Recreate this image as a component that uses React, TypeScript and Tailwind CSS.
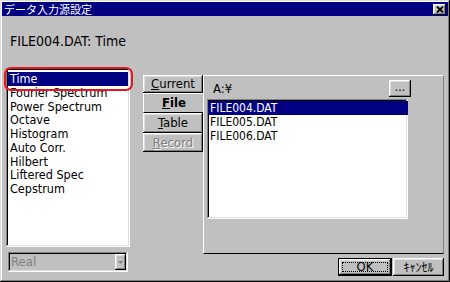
import React from 'react';

const ui = "font-['Liberation_Sans_Narrow','DejaVu_Sans_Condensed','Liberation_Sans',sans-serif]";
const jp = "font-['Noto_Sans_CJK_JP',sans-serif]";
const raised =
  'shadow-[inset_-1px_-1px_#000,inset_1px_1px_#fff,inset_-2px_-2px_#808080,inset_2px_2px_#dfdfdf]';
const sunken =
  'shadow-[inset_-1px_-1px_#fff,inset_1px_1px_#808080,inset_-2px_-2px_#dfdfdf,inset_2px_2px_#000]';

const kinds = [
  'Time',
  'Fourier Spectrum',
  'Power Spectrum',
  'Octave',
  'Histogram',
  'Auto Corr.',
  'Hilbert',
  'Liftered Spec',
  'Cepstrum',
];

const files = ['FILE004.DAT', 'FILE005.DAT', 'FILE006.DAT'];

function Tab({ label, selected, disabled, h }: { label: string; selected?: boolean; disabled?: boolean; h: string }) {
  return (
    <div
      className={`${h} flex items-center justify-center text-[13px] ${
        selected
          ? 'w-[61px] border-t border-l border-white border-b border-b-black font-bold'
          : `w-[60px] ${raised}`
      } ${disabled ? 'text-[#808080] [text-shadow:1px_1px_#fff]' : 'text-black'}`}
    >
      <span>
        <span className="underline">{label[0]}</span>
        {label.slice(1)}
      </span>
    </div>
  );
}

export default function App() {
  return (
    <div
      className={`relative flex h-[282px] w-[450px] flex-col bg-[#c0c0c0] p-[2px] ${ui} shadow-[inset_-1px_-1px_#000,inset_1px_1px_#dfdfdf,inset_-2px_-2px_#808080,inset_2px_2px_#fff]`}
    >
      {/* title bar */}
      <div className="flex h-[14px] items-center justify-between bg-[#000080] pl-[2px] pr-[2px]">
        <span className={`${jp} text-[11px] leading-none text-white`}>データ入力源設定</span>
        <div className={`flex h-[11px] w-[13px] items-center justify-center bg-[#c0c0c0] ${raised}`}>
          <svg width="8" height="7" viewBox="0 0 8 7">
            <path d="M1 0.5 L7 6.5 M7 0.5 L1 6.5" stroke="#000" strokeWidth="1.8" />
          </svg>
        </div>
      </div>

      <div className="mt-[18px] h-[14px] pl-[8px] text-[14px] leading-[14px] text-black">FILE004.DAT: Time</div>

      <div className="mt-[20px] flex gap-[13px] pl-[4px]">
        {/* left column */}
        <div className="flex w-[124px] flex-col">
          <div className={`h-[179px] bg-white px-[2px] pt-[4px] ${sunken}`}>
            {kinds.map((k, i) => (
              <div
                key={k}
                className={`h-[13.75px] pl-[2px] text-[12.5px] leading-[13.75px] ${
                  i === 0 ? 'bg-[#000080] text-white' : 'text-black'
                }`}
              >
                {k}
              </div>
            ))}
          </div>
          <div className={`mx-[2px] mt-[5px] flex h-[20px] items-center bg-[#c0c0c0] pl-[3px] pr-[2px] ${sunken}`}>
            <span className="flex-1 text-[13px] text-[#808080]">Real</span>
            <div className={`flex h-[16px] w-[11px] items-center justify-center ${raised}`}>
              <svg width="5" height="3" viewBox="0 0 5 3">
                <path d="M0 0 H5 L2.5 3 Z" fill="#808080" />
              </svg>
            </div>
          </div>
        </div>

        {/* right column */}
        <div className="flex w-[301px] flex-col pt-[7px]">
          <div className="flex">
            <div className="flex w-[60px] flex-col">
              <Tab label="Current" h="h-[18px]" />
              <Tab label="File" h="h-[20px]" selected />
              <Tab label="Table" h="h-[20px]" />
              <Tab label="Record" h="h-[19px]" disabled />
            </div>
            <div className="flex h-[179px] w-[241px] flex-col border-t border-l border-white border-b border-b-black border-r border-r-[#808080] pt-[4px]">
              <div className="flex h-[17px] items-center pr-[32px]">
                <span className="pl-[9px] text-[13px] text-black">A:¥</span>
                <div className={`ml-auto flex h-[17px] w-[22px] items-center justify-center text-[12px] leading-none text-black ${raised}`}>
                  <span className="-mt-[4px]">...</span>
                </div>
              </div>
              <div className={`ml-[3px] mt-[2px] h-[120px] w-[201px] bg-white pt-[2px] pl-[1px] pr-[0px] ${sunken}`}>
                {files.map((f, i) => (
                  <div
                    key={f}
                    className={`h-[14px] pl-[2px] text-[12px] leading-[14px] ${
                      i === 0 ? 'bg-[#000080] text-white' : 'text-black'
                    }`}
                  >
                    {f}
                  </div>
                ))}
              </div>
            </div>
          </div>

          <div className="mt-[4px] flex justify-end gap-[1px]">
            <div className="h-[18px] w-[54px] border border-black">
              <div className={`flex h-full w-full items-center justify-center p-[3px] ${raised}`}>
                <div className="flex h-full w-full items-center justify-center border border-dotted border-black text-[13px] text-black">
                  OK
                </div>
              </div>
            </div>
            <div className={`flex h-[18px] w-[51px] items-center justify-center ${jp} text-[12px] text-black ${raised}`}>
              ｷｬﾝｾﾙ
            </div>
          </div>
        </div>
      </div>

      {/* annotation */}
      <div className="pointer-events-none absolute left-[4px] top-[67px] h-[24px] w-[129px] rounded-[7px] border-2 border-[#e8141e]" />
    </div>
  );
}
